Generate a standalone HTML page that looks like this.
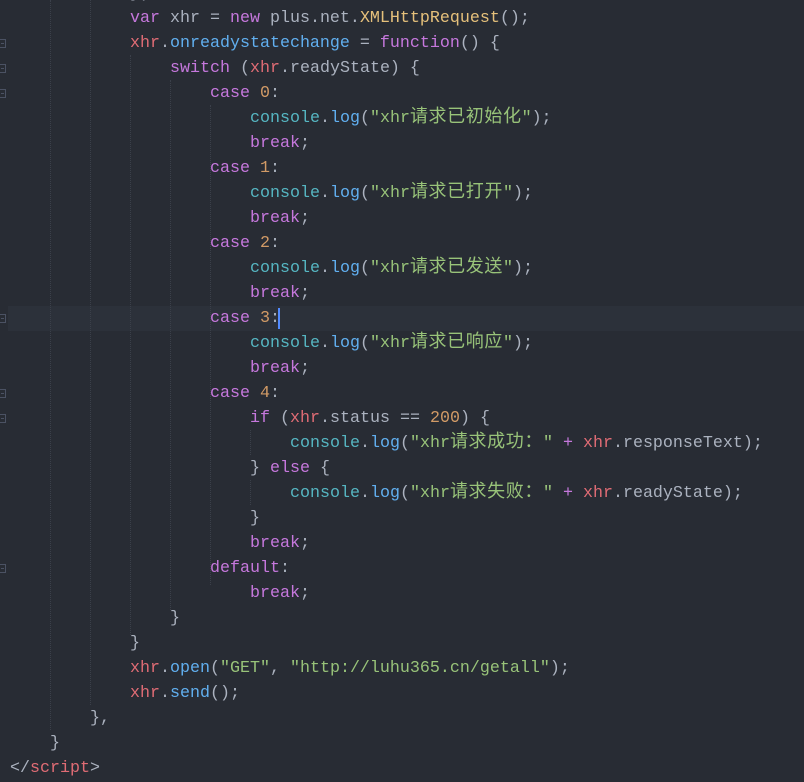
<!DOCTYPE html>
<html><head><meta charset="utf-8"><style>
body{margin:0;width:804px;height:782px;background:#282c34;overflow:hidden;position:relative;font-family:"Liberation Mono","Noto Sans CJK SC",monospace;font-size:16.67px;color:#abb2bf}
.l{position:absolute;left:0;height:25px;line-height:25px;white-space:pre}
.k{color:#c678dd}.v{color:#e06c75}.f{color:#61afef}.c{color:#56b6c2}.s{color:#98c379}.n{color:#d19a66}.y{color:#e5c07b}
.z{font-size:18px;letter-spacing:0.6px;font-family:"Noto Sans CJK SC",sans-serif;line-height:0}
.g{position:absolute;width:0;border-left:1px dotted #3b404a}
.fm{position:absolute;left:0;width:5px;height:7px;border:1px solid #4b5263;border-left:none}
.fm:after{content:"";position:absolute;left:1px;top:3px;width:3px;height:1px;background:#4b5263}
</style></head><body>
<div style="position:absolute;left:8px;right:0;top:306px;height:25px;background:#2c313a"></div>
<div class="g" style="left:50px;top:0;height:730px"></div>
<div class="g" style="left:90px;top:0;height:705px"></div>
<div class="g" style="left:130px;top:55px;height:580px"></div>
<div class="g" style="left:170px;top:80px;height:530px"></div>
<div class="g" style="left:210px;top:105px;height:480px"></div>
<div class="g" style="left:250px;top:430px;height:25px"></div>
<div class="g" style="left:250px;top:480px;height:25px"></div>
<div style="position:absolute;left:278px;top:308px;width:2px;height:21px;background:#528bff"></div>
<div class="fm" style="top:39px"></div><div class="fm" style="top:64px"></div><div class="fm" style="top:89px"></div>
<div class="fm" style="top:314px"></div><div class="fm" style="top:389px"></div><div class="fm" style="top:414px"></div><div class="fm" style="top:564px"></div>
<div class="l" style="top:-19px;left:130px">});</div>
<div class="l" style="top:6px;left:130px"><span class="k">var</span> xhr = <span class="k">new</span> plus.net.<span class="y">XMLHttpRequest</span>();</div>
<div class="l" style="top:31px;left:130px"><span class="v">xhr</span>.<span class="f">onreadystatechange</span> = <span class="k">function</span>() {</div>
<div class="l" style="top:56px;left:170px"><span class="k">switch</span> (<span class="v">xhr</span>.readyState) {</div>
<div class="l" style="top:81px;left:210px"><span class="k">case</span> <span class="n">0</span>:</div>
<div class="l" style="top:106px;left:250px"><span class="c">console</span>.<span class="f">log</span>(<span class="s">"xhr<span class="z">请求已初始化</span>"</span>);</div>
<div class="l" style="top:131px;left:250px"><span class="k">break</span>;</div>
<div class="l" style="top:156px;left:210px"><span class="k">case</span> <span class="n">1</span>:</div>
<div class="l" style="top:181px;left:250px"><span class="c">console</span>.<span class="f">log</span>(<span class="s">"xhr<span class="z">请求已打开</span>"</span>);</div>
<div class="l" style="top:206px;left:250px"><span class="k">break</span>;</div>
<div class="l" style="top:231px;left:210px"><span class="k">case</span> <span class="n">2</span>:</div>
<div class="l" style="top:256px;left:250px"><span class="c">console</span>.<span class="f">log</span>(<span class="s">"xhr<span class="z">请求已发送</span>"</span>);</div>
<div class="l" style="top:281px;left:250px"><span class="k">break</span>;</div>
<div class="l" style="top:306px;left:210px"><span class="k">case</span> <span class="n">3</span>:</div>
<div class="l" style="top:331px;left:250px"><span class="c">console</span>.<span class="f">log</span>(<span class="s">"xhr<span class="z">请求已响应</span>"</span>);</div>
<div class="l" style="top:356px;left:250px"><span class="k">break</span>;</div>
<div class="l" style="top:381px;left:210px"><span class="k">case</span> <span class="n">4</span>:</div>
<div class="l" style="top:406px;left:250px"><span class="k">if</span> (<span class="v">xhr</span>.status == <span class="n">200</span>) {</div>
<div class="l" style="top:431px;left:290px"><span class="c">console</span>.<span class="f">log</span>(<span class="s">"xhr<span class="z">请求成功：</span>"</span> <span class="k">+</span> <span class="v">xhr</span>.responseText);</div>
<div class="l" style="top:456px;left:250px">} <span class="k">else</span> {</div>
<div class="l" style="top:481px;left:290px"><span class="c">console</span>.<span class="f">log</span>(<span class="s">"xhr<span class="z">请求失败：</span>"</span> <span class="k">+</span> <span class="v">xhr</span>.readyState);</div>
<div class="l" style="top:506px;left:250px">}</div>
<div class="l" style="top:531px;left:250px"><span class="k">break</span>;</div>
<div class="l" style="top:556px;left:210px"><span class="k">default</span>:</div>
<div class="l" style="top:581px;left:250px"><span class="k">break</span>;</div>
<div class="l" style="top:606px;left:170px">}</div>
<div class="l" style="top:631px;left:130px">}</div>
<div class="l" style="top:656px;left:130px"><span class="v">xhr</span>.<span class="f">open</span>(<span class="s">"GET"</span>, <span class="s">"http://luhu365.cn/getall"</span>);</div>
<div class="l" style="top:681px;left:130px"><span class="v">xhr</span>.<span class="f">send</span>();</div>
<div class="l" style="top:706px;left:90px">},</div>
<div class="l" style="top:731px;left:50px">}</div>
<div class="l" style="top:756px;left:10px">&lt;/<span class="v">script</span>&gt;</div>
</body></html>
